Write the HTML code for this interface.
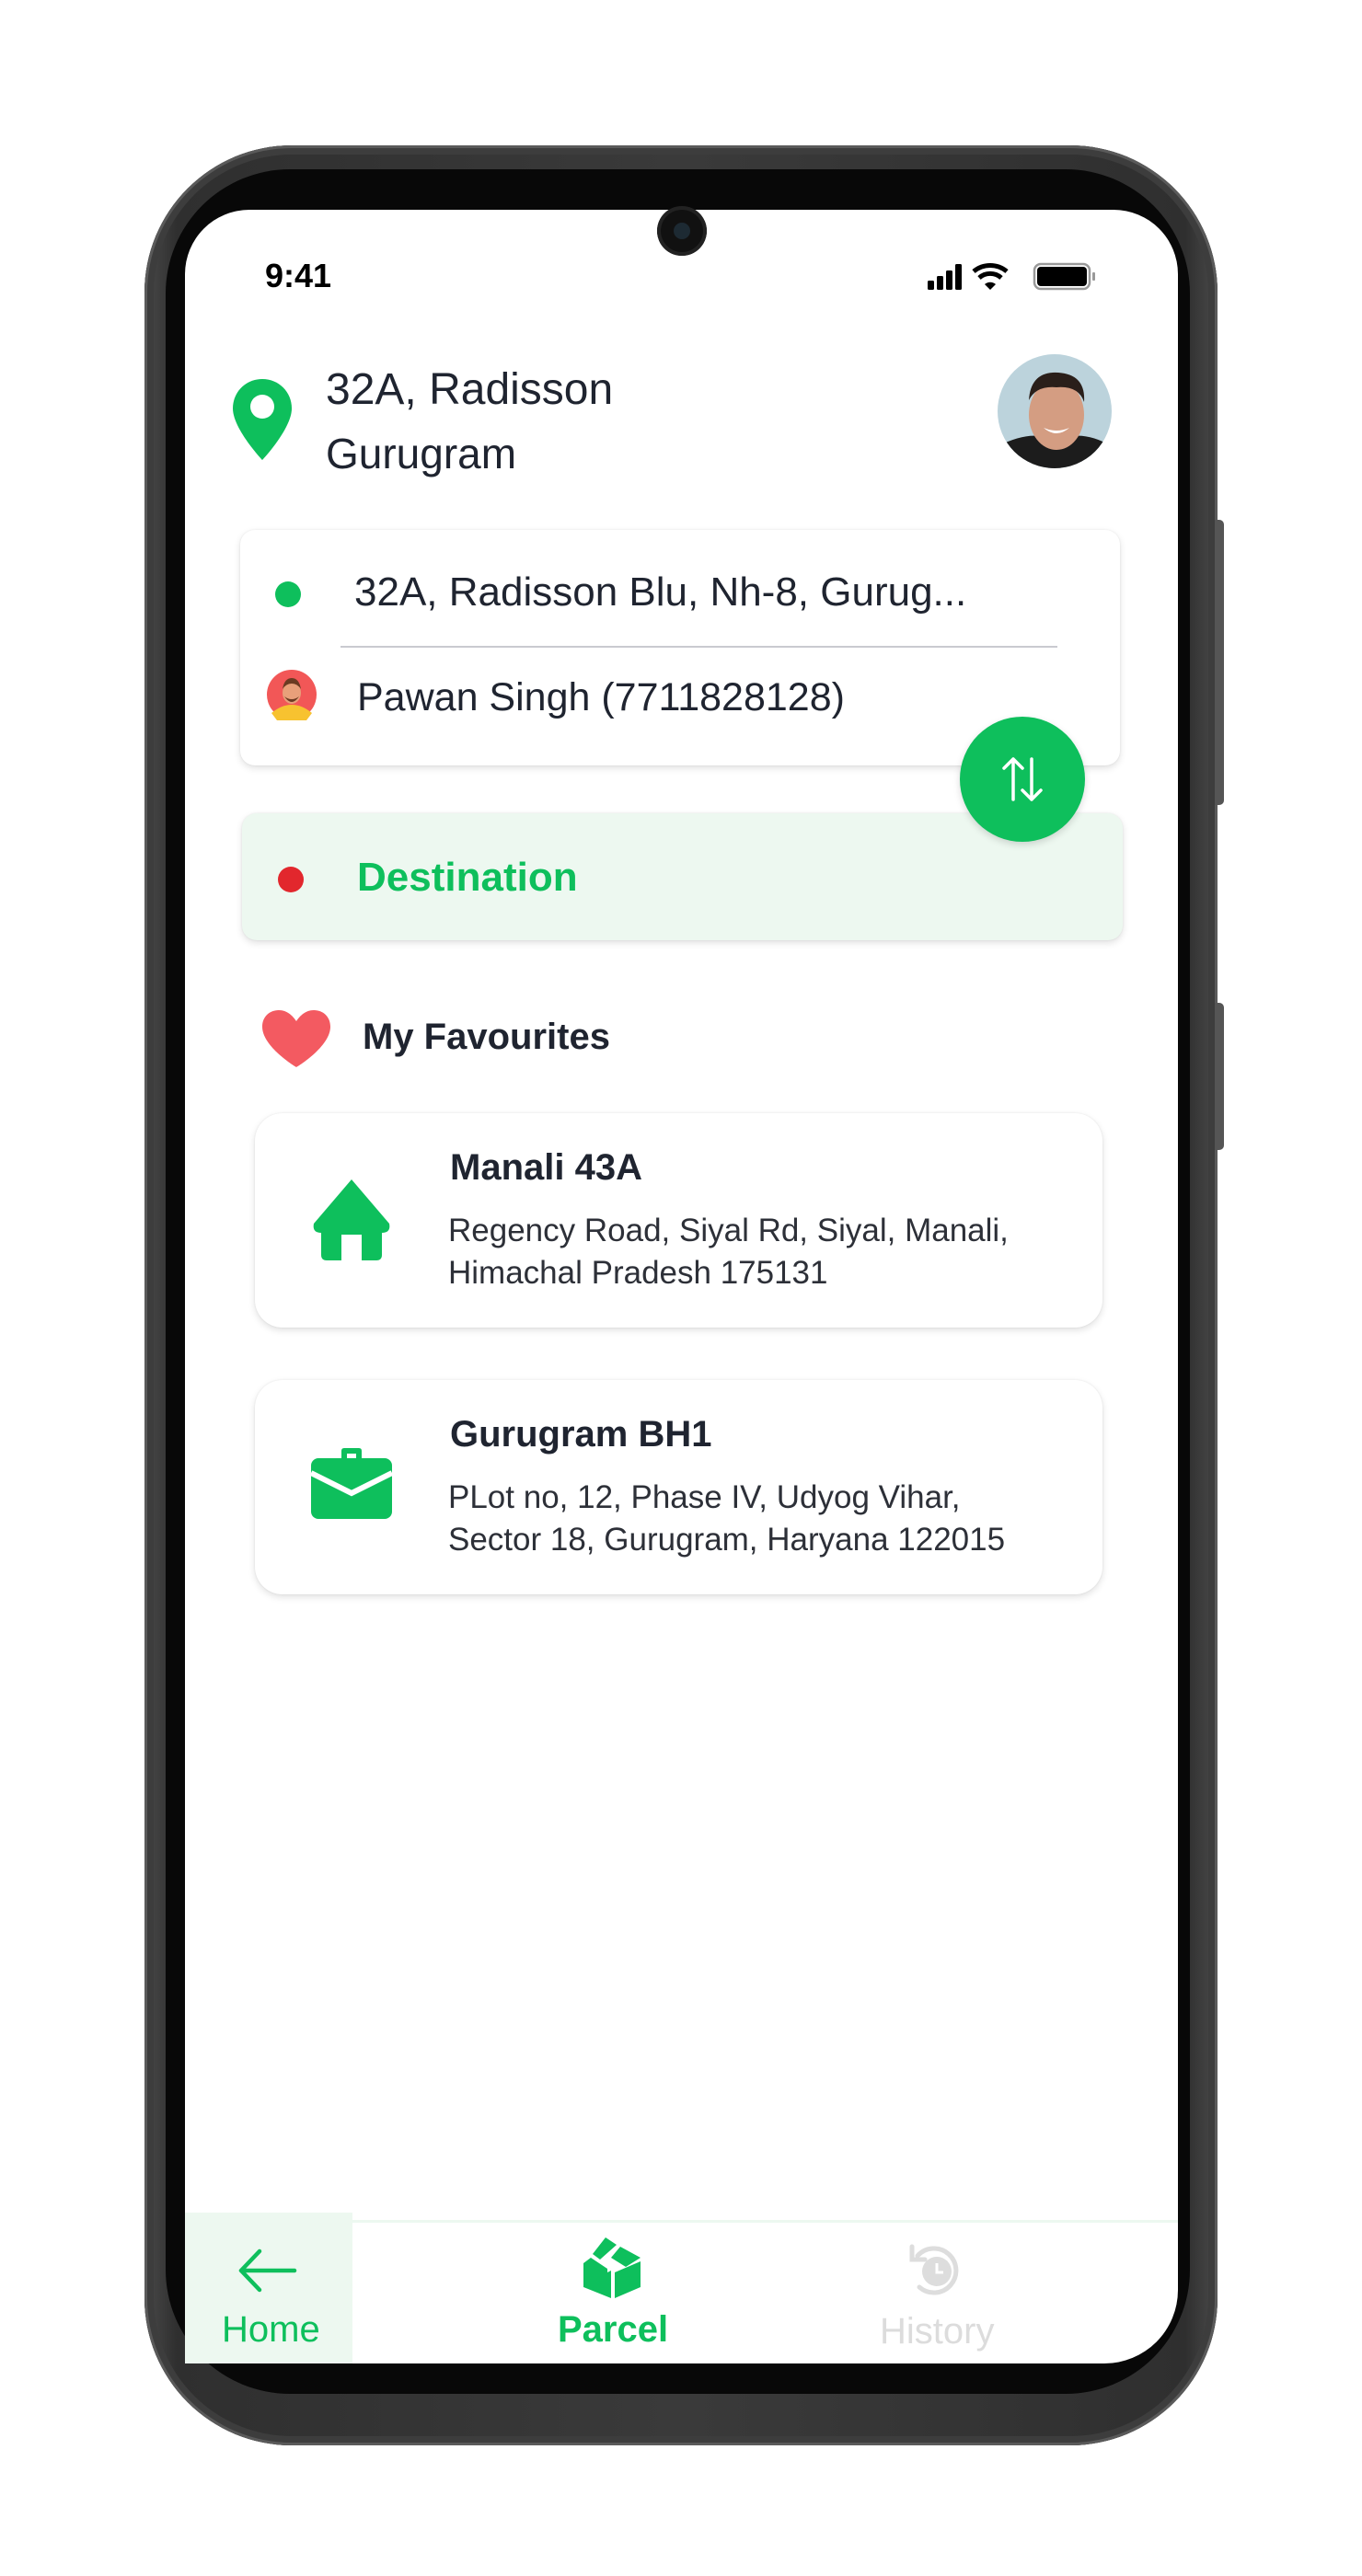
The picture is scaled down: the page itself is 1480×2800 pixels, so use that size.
<!DOCTYPE html>
<html><head><meta charset="utf-8"><style>
*{margin:0;padding:0;box-sizing:border-box}
body{width:1480px;height:2800px;background:#fff;position:relative;overflow:hidden;font-family:"Liberation Sans",sans-serif;color:#1f2430}
.a{position:absolute}
.frame{left:157px;top:158px;width:1166px;height:2500px;border-radius:160px;background:linear-gradient(90deg,#4a4a4a,#2f2f2f 3%,#3a3a3a 50%,#2f2f2f 97%,#4a4a4a);box-shadow:inset 0 0 0 3px #5a5a5a,inset 0 0 0 10px #3d3d3d}
.bezel{left:180px;top:184px;width:1113px;height:2418px;border-radius:135px;background:#080808}
.screen{left:201px;top:228px;width:1079px;height:2341px;background:#fff;border-radius:70px 70px 80px 80px;overflow:hidden}
.card{background:#fff;border-radius:16px;box-shadow:0 3px 8px rgba(0,0,0,.12),0 0 2px rgba(0,0,0,.08)}
.t{white-space:nowrap;line-height:1}
</style></head><body>
<div class="a frame"></div>
<div class="a" style="left:1320px;top:565px;width:10px;height:310px;background:#555;border-radius:0 5px 5px 0"></div>
<div class="a" style="left:1320px;top:1090px;width:10px;height:160px;background:#555;border-radius:0 5px 5px 0"></div>
<div class="a bezel"></div>
<div class="a screen"></div>
<div class="a" style="left:714px;top:224px;width:54px;height:54px;border-radius:50%;background:#111;box-shadow:inset 0 0 0 4px #222"><div style="margin:18px;width:18px;height:18px;border-radius:50%;background:#1d2a33"></div></div>

<div class="a t" style="left:288px;top:282px;font-size:36px;font-weight:bold;color:#000">9:41</div>
<svg class="a" style="left:1006px;top:283px" width="190" height="34" viewBox="0 0 190 34">
<rect x="2" y="22" width="7" height="10" rx="1.5" fill="#000"/><rect x="12" y="17" width="7" height="15" rx="1.5" fill="#000"/><rect x="22" y="11" width="7" height="21" rx="1.5" fill="#000"/><rect x="32" y="4" width="7" height="28" rx="1.5" fill="#000"/>
<path d="M52 12 A28 28 0 0 1 88 12" stroke="#000" stroke-width="5" fill="none"/><path d="M58 19 A18 18 0 0 1 82 19" stroke="#000" stroke-width="5" fill="none"/><path d="M64 26 L70 32 L76 26 A9 9 0 0 0 64 26Z" fill="#000"/>
<rect x="118" y="4" width="60" height="27" rx="7" fill="none" stroke="#999" stroke-width="2.5"/><rect x="121" y="7" width="54" height="21" rx="4" fill="#000"/><rect x="181" y="13" width="3" height="9" rx="1" fill="#999"/></svg>

<svg class="a" style="left:251px;top:410px" width="68" height="92" viewBox="0 0 68 92"><path d="M34 2C16 2 2 16 2 34C2 56 34 90 34 90S66 56 66 34C66 16 52 2 34 2Z" fill="#0ebf5c"/><circle cx="34" cy="32" r="13" fill="#fff"/></svg>
<div class="a t" style="left:354px;top:400px;font-size:48px">32A, Radisson</div>
<div class="a t" style="left:354px;top:470px;font-size:46px">Gurugram</div>
<svg class="a" style="left:1084px;top:385px" width="124" height="124" viewBox="0 0 124 124"><defs><clipPath id="c"><circle cx="62" cy="62" r="62"/></clipPath></defs><g clip-path="url(#c)"><rect width="124" height="124" fill="#bcd3dc"/><path d="M0 100 Q40 80 62 95 Q90 80 124 100 L124 124 L0 124Z" fill="#1c1c1c"/><ellipse cx="64" cy="66" rx="30" ry="38" fill="#d49d82"/><path d="M34 50 Q36 18 66 20 Q96 22 94 52 Q88 34 64 36 Q42 34 34 50Z" fill="#2a1f1a"/><path d="M50 80 Q64 92 78 80 Q64 86 50 80Z" fill="#fff"/></g></svg>

<div class="a card" style="left:261px;top:576px;width:956px;height:256px"></div>
<div class="a" style="left:299px;top:632px;width:28px;height:28px;border-radius:50%;background:#0ebf5c"></div>
<div class="a t" style="left:385px;top:622px;font-size:44px">32A, Radisson Blu, Nh-8, Gurug...</div>
<div class="a" style="left:370px;top:702px;width:779px;height:2px;background:#c9cad0"></div>
<svg class="a" style="left:289px;top:727px" width="56" height="56" viewBox="0 0 56 56"><circle cx="28" cy="28" r="27" fill="#f25757"/><path d="M6 48 Q28 30 50 48 L44 56 L12 56Z" fill="#f7c230"/><ellipse cx="28" cy="26" rx="10" ry="12" fill="#e8a07a"/><path d="M18 22 Q20 10 28 10 Q36 10 38 22 Q34 16 28 16 Q22 16 18 22Z" fill="#6b3b22"/><path d="M20 30 Q28 42 36 30 Q28 36 20 30Z" fill="#6b3b22"/></svg>
<div class="a t" style="left:388px;top:737px;font-size:43px">Pawan Singh (7711828128)</div>

<div class="a card" style="left:263px;top:884px;width:957px;height:138px;background:#edf8f0"></div>
<div class="a" style="left:302px;top:942px;width:28px;height:28px;border-radius:50%;background:#e2272d"></div>
<div class="a t" style="left:388px;top:932px;font-size:44px;font-weight:bold;color:#0ebf5c">Destination</div>

<div class="a" style="left:1043px;top:779px;width:136px;height:136px;border-radius:50%;background:#0ebf5c;box-shadow:0 3px 8px rgba(0,0,0,.15)"></div>
<svg class="a" style="left:1081px;top:817px" width="60" height="60" viewBox="0 0 60 60"><path d="M20 52V8M10 18L20 8L30 18M40 8V52M30 42L40 52L50 42" stroke="#fff" stroke-width="3.5" fill="none" stroke-linecap="round" stroke-linejoin="round"/></svg>

<svg class="a" style="left:283px;top:1096px" width="78" height="66" viewBox="0 0 78 66"><path d="M39 64C39 64 2 42 2 20C2 9 10 2 20 2C29 2 35 8 39 14C43 8 49 2 58 2C68 2 76 9 76 20C76 42 39 64 39 64Z" fill="#f35a61"/></svg>
<div class="a t" style="left:394px;top:1107px;font-size:40px;font-weight:bold">My Favourites</div>

<div class="a card" style="left:277px;top:1210px;width:921px;height:233px;border-radius:30px"></div>
<svg class="a" style="left:337px;top:1280px" width="90" height="92" viewBox="0 0 90 92"><path d="M45 2L4 50Q2 60 12 60V84Q12 90 18 90H34V62H56V90H72Q78 90 78 84V60Q88 60 86 50Z" fill="#0ebf5c"/></svg>
<div class="a t" style="left:489px;top:1249px;font-size:40px;font-weight:bold">Manali 43A</div>
<div class="a t" style="left:487px;top:1320px;font-size:35px;color:#2d3038">Regency Road, Siyal Rd, Siyal, Manali,</div>
<div class="a t" style="left:487px;top:1366px;font-size:35px;color:#2d3038">Himachal Pradesh 175131</div>

<div class="a card" style="left:277px;top:1500px;width:921px;height:233px;border-radius:30px"></div>
<svg class="a" style="left:337px;top:1573px" width="90" height="80" viewBox="0 0 90 80"><path d="M34 12V4Q34 1 37 1H53Q56 1 56 4V12H50V7H40V12Z" fill="#0ebf5c"/><rect x="1" y="12" width="88" height="66" rx="8" fill="#0ebf5c"/><path d="M1 28L45 50L89 28" stroke="#fff" stroke-width="6" fill="none"/></svg>
<div class="a t" style="left:489px;top:1539px;font-size:40px;font-weight:bold">Gurugram BH1</div>
<div class="a t" style="left:487px;top:1610px;font-size:35px;color:#2d3038">PLot no, 12, Phase IV, Udyog Vihar,</div>
<div class="a t" style="left:487px;top:1656px;font-size:35px;color:#2d3038">Sector 18, Gurugram, Haryana 122015</div>

<div class="a" style="left:383px;top:2413px;width:897px;height:3px;background:#edf8f0"></div>
<div class="a" style="left:201px;top:2405px;width:182px;height:164px;background:#edf8f0"></div>
<svg class="a" style="left:258px;top:2443px" width="66" height="50" viewBox="0 0 66 50"><path d="M62 25H6M24 4L4 25L24 46" stroke="#0ebf5c" stroke-width="4.5" fill="none" stroke-linecap="round" stroke-linejoin="round"/></svg>
<div class="a t" style="left:241px;top:2512px;font-size:40px;color:#0ebf5c">Home</div>
<svg class="a" style="left:630px;top:2430px" width="70" height="70" viewBox="0 0 70 70"><path d="M28 2L40 10L22 26L14 20Z" fill="#0ebf5c"/><path d="M44 12L66 24L50 34L34 24Z" fill="#0ebf5c"/><path d="M4 30L12 24L30 36V40L34 38V68L4 56Z" fill="#0ebf5c"/><path d="M38 40L66 28V56L38 68Z" fill="#0ebf5c"/></svg>
<div class="a t" style="left:606px;top:2512px;font-size:40px;font-weight:bold;color:#0ebf5c">Parcel</div>
<svg class="a" style="left:985px;top:2436px" width="64" height="64" viewBox="0 0 64 64"><path d="M14 50A24 24 0 1 0 12 16" stroke="#ddd" stroke-width="5" fill="none" stroke-linecap="round"/><path d="M6 6V20H20" stroke="#ddd" stroke-width="5" fill="none" stroke-linecap="round"/><circle cx="33" cy="33" r="16" fill="#ddd"/><path d="M33 24V34H40" stroke="#fff" stroke-width="3" fill="none"/></svg>
<div class="a t" style="left:956px;top:2514px;font-size:40px;color:#dcdcdc">History</div>
</body></html>
